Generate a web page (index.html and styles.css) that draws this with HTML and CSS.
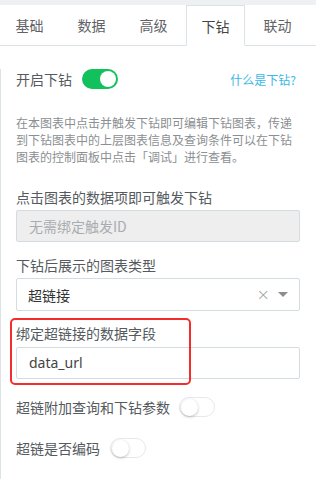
FILE: index.html
```html
<!DOCTYPE html>
<html lang="zh">
<head>
<meta charset="utf-8">
<link rel="stylesheet" href="styles.css">
</head>
<body>
<div class="topstrip"></div>
<div class="tabs">
  <div class="tab">基础</div>
  <div class="tab">数据</div>
  <div class="tab">高级</div>
  <div class="tab active">下钻</div>
  <div class="tab">联动</div>
</div>
<div class="panel">
  <div class="row head-row">
    <span class="label-inline">开启下钻</span>
    <span class="switch on"><span class="knob"></span></span>
    <a class="help">什么是下钻?</a>
  </div>
  <p class="desc">在本图表中点击并触发下钻即可编辑下钻图表，传递到下钻图表中的上层图表信息及查询条件可以在下钻图表的控制面板中点击「调试」进行查看。</p>

  <div class="label l1">点击图表的数据项即可触发下钻</div>
  <div class="input disabled">无需绑定触发ID</div>

  <div class="label l2">下钻后展示的图表类型</div>
  <div class="input select">
    <span class="value">超链接</span>
    <span class="clear">×</span>
    <span class="caret"></span>
  </div>

  <div class="highlight-wrap">
    <div class="label l3">绑定超链接的数据字段</div>
    <div class="input field">data_url</div>
    <div class="annotation"></div>
  </div>

  <div class="row toggle-row t1">
    <span class="label-inline">超链附加查询和下钻参数</span>
    <span class="switch off"><span class="knob"></span></span>
  </div>
  <div class="row toggle-row t2">
    <span class="label-inline">超链是否编码</span>
    <span class="switch off"><span class="knob"></span></span>
  </div>
</div>
</body>
</html>
```

FILE: styles.css
```css
* { box-sizing: border-box; }
html, body {
  margin: 0;
  padding: 0;
  background: #ffffff;
  font-family: "Noto Sans CJK SC", "Noto Sans", sans-serif;
  width: 316px;
  height: 479px;
  overflow: hidden;
}
.topstrip {
  height: 5px;
  background: #eef1f3;
}
.tabs {
  display: flex;
  height: 41px;
  border-bottom: 1px solid #dbe3e7;
  background: #fff;
}
.tab {
  width: 59px;
  margin-right: 3px;
  height: 40px;
  line-height: 40px;
  text-align: center;
  font-size: 14px;
  color: #5f6366;
}
.tab.active {
  height: 41px;
  border: 1px solid #dbe3e7;
  border-bottom-color: #fff;
  line-height: 40px;
  color: #444;
  background: #fff;
}
.panel {
  border-left: 1px solid #dbe3e7;
  padding: 0 16px 0 15px;
  height: 433px;
}
.row {
  display: flex;
  align-items: center;
  height: 20px;
}
.head-row {
  margin-top: 23px;
}
.label-inline {
  font-size: 14px;
  color: #555a5e;
  line-height: 20px;
}
.switch {
  position: relative;
  display: inline-block;
  width: 36px;
  height: 20px;
  border-radius: 10px;
  margin-left: 10px;
}
.switch .knob {
  position: absolute;
  top: 2px;
  width: 16px;
  height: 16px;
  border-radius: 50%;
  background: #fff;
}
.switch.on {
  background: #12c15b;
}
.switch.on .knob {
  right: 2px;
}
.switch.off {
  background: #fff;
  border: 1px solid #e6e8ea;
}
.switch.off .knob {
  top: 1px;
  left: 1px;
  width: 17px;
  height: 17px;
  box-shadow: 0 1px 3px rgba(0,0,0,0.25);
}
.help {
  margin-left: auto;
  margin-right: 4px;
  font-size: 12px;
  color: #3ab7e8;
}
.desc {
  margin: 25px 0 0 0;
  font-size: 12px;
  line-height: 17px;
  color: #8b8f92;
}
.label {
  font-size: 14px;
  line-height: 20px;
  color: #555a5e;
}
.l1 { margin-top: 22px; }
.l2 { margin-top: 13px; }
.l3 { margin-top: 0; }
.input {
  margin-top: 3px;
  height: 32px;
  border: 1px solid #d3dde1;
  border-radius: 2px;
  padding: 0 12px;
  font-size: 14px;
  line-height: 30px;
  color: #444;
  font-family: "Noto Sans", "Noto Sans CJK SC", sans-serif;
}
.input.disabled {
  background: #eeeeee;
  color: #a9acae;
  font-family: "Noto Sans CJK SC", "Noto Sans", sans-serif;
}
.input.select {
  display: flex;
  align-items: center;
  height: 33px;
  padding: 0 11px;
  font-family: "Noto Sans CJK SC", "Noto Sans", sans-serif;
}
.select .value {
  color: #333;
}
.select .clear {
  margin-left: auto;
  color: #9a9ea1;
  font-size: 16px;
  font-family: "DejaVu Sans", sans-serif;
  font-weight: 300;
}
.select .caret {
  margin-left: 8px;
  width: 0;
  height: 0;
  border-left: 5px solid transparent;
  border-right: 5px solid transparent;
  border-top: 5px solid #8a8e91;
}
.highlight-wrap {
  position: relative;
  margin-top: 12px;
}
.input.field {
  margin-top: 4px;
}
.annotation {
  position: absolute;
  top: -5px;
  left: -6px;
  width: 181px;
  height: 67px;
  border: 2px solid #f52c2c;
  border-radius: 5px;
}
.t1 { margin-top: 18px; }
.t2 { margin-top: 21px; }
.t1 .switch { margin-left: 9px; }
```
